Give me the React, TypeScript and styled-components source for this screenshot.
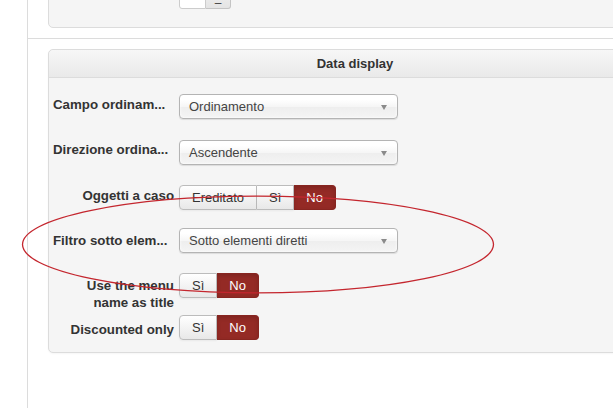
import React from "react";
import styled, { createGlobalStyle } from "styled-components";

const Global = createGlobalStyle`
  html, body { margin: 0; padding: 0; background: #fff; overflow: hidden; }
  body { font-family: "Liberation Sans", Arial, sans-serif; font-size: 13px; color: #333; }
`;

const Page = styled.div`
  position: relative;
  display: flex;
  width: 613px;
  height: 408px;
  overflow: hidden;
`;

const Sidebar = styled.div`
  flex: 0 0 27px;
  border-right: 1px solid #dcdcdc;
`;

const Main = styled.div`
  flex: 1;
  min-width: 0;
  padding-left: 20px;
  display: flex;
  flex-direction: column;
`;

const TopPanel = styled.div`
  flex: 0 0 auto;
  margin-top: -30px;
  height: 43px;
  width: 612px;
  box-sizing: content-box;
  padding: 13px 0 0 130px;
  background: #f5f5f5;
  border: 1px solid #dcdcdc;
  border-radius: 0 0 5px 5px;
`;

const Stepper = styled.div`
  display: flex;
  height: 25px;
`;

const StepInput = styled.div`
  width: 25px;
  background: #fff;
  border: 1px solid #ccc;
  border-radius: 3px 0 0 3px;
`;

const StepButton = styled.div`
  width: 25px;
  border: 1px solid #c4c4c4;
  border-left: none;
  border-radius: 0 3px 3px 0;
  background: linear-gradient(#f4f4f4, #e4e4e4);
  display: flex;
  align-items: center;
  justify-content: center;
  color: #444;
  font-size: 12px;
  line-height: 1;
  padding-top: 12px;
  box-sizing: border-box;
`;

const Rule = styled.div`
  margin: 10px 0 0 -20px;
  height: 0;
  border-top: 1px solid #dcdcdc;
  width: 700px;
`;

const Panel = styled.section`
  margin-top: 10px;
  width: 612px;
  flex: 0 0 auto;
  background: #f5f5f5;
  border: 1px solid #dcdcdc;
  border-radius: 5px;
  box-shadow: 0 1px 2px rgba(0, 0, 0, 0.04);
`;

const PanelHeader = styled.h3`
  margin: 0;
  height: 27px;
  line-height: 27px;
  text-align: center;
  font-size: 13px;
  font-weight: bold;
  color: #333;
  background: linear-gradient(#f7f7f7, #e9e9e9);
  border-bottom: 1px solid #dcdcdc;
  border-radius: 5px 5px 0 0;
`;

const PanelBody = styled.div`
  padding: 16px 0 12px 4px;
  display: flex;
  flex-direction: column;
`;

const Row = styled.div<{ $top: number }>`
  display: flex;
  align-items: flex-start;
  gap: 5px;
  margin-top: ${(p) => p.$top}px;
`;

const Label = styled.label<{ $pad: number; $left?: boolean }>`
  flex: 0 0 121px;
  padding-top: ${(p) => p.$pad}px;
  line-height: 17px;
  font-weight: bold;
  font-size: 13.3px;
  color: #333;
  white-space: nowrap;
  text-align: ${(p) => (p.$left ? "left" : "right")};
  overflow: visible;
`;

const SelectBox = styled.div`
  position: relative;
  width: 219px;
  height: 25px;
  box-sizing: border-box;
  padding: 0 24px 0 9px;
  line-height: 23px;
  color: #444;
  font-size: 13px;
  border: 1px solid #b4b4b4;
  border-radius: 4px;
  background: linear-gradient(#ffffff 20%, #f6f6f6 50%, #eeeeee 52%, #f4f4f4 100%);
  box-shadow: inset 0 0 3px #fff, 0 1px 1px rgba(0, 0, 0, 0.1);
  white-space: nowrap;
  overflow: hidden;
`;

const Caret = styled.span`
  position: absolute;
  right: 10px;
  top: 10px;
  width: 0;
  height: 0;
  border-left: 3px solid transparent;
  border-right: 3px solid transparent;
  border-top: 5px solid #8a8a8a;
`;

const Group = styled.div`
  display: flex;
`;

const Choice = styled.span<{ $on?: boolean }>`
  height: 25px;
  box-sizing: border-box;
  padding: 0 12px;
  line-height: 23px;
  font-size: 13px;
  color: ${(p) => (p.$on ? "#fff" : "#333")};
  background: ${(p) =>
    p.$on ? "#942a25" : "linear-gradient(#ffffff, #e8e8e8)"};
  border: 1px solid ${(p) => (p.$on ? "#872520" : "#bcbcbc")};
  border-left-width: 0;
  box-shadow: ${(p) =>
    p.$on ? "inset 0 2px 4px rgba(0,0,0,0.15)" : "0 1px 2px rgba(0,0,0,0.05)"};
  &:first-child {
    border-left-width: 1px;
    border-radius: 4px 0 0 4px;
  }
  &:last-child {
    border-radius: 0 4px 4px 0;
  }
`;

const Mark = styled.svg`
  position: absolute;
  left: 0;
  top: 0;
  pointer-events: none;
`;

function Select({ value }: { value: string }) {
  return (
    <SelectBox>
      {value}
      <Caret />
    </SelectBox>
  );
}

function Toggle({ options, active }: { options: string[]; active: string }) {
  return (
    <Group>
      {options.map((o) => (
        <Choice key={o} $on={o === active}>
          {o}
        </Choice>
      ))}
    </Group>
  );
}

export default function App() {
  return (
    <>
      <Global />
      <Page>
        <Sidebar />
        <Main>
          <TopPanel>
            <Stepper>
              <StepInput />
              <StepButton>–</StepButton>
            </Stepper>
          </TopPanel>
          <Rule />
          <Panel>
            <PanelHeader>Data display</PanelHeader>
            <PanelBody>
              <Row $top={0}>
                <Label $pad={2} $left>Campo ordinam...</Label>
                <Select value="Ordinamento" />
              </Row>
              <Row $top={21}>
                <Label $pad={1} $left>Direzione ordina...</Label>
                <Select value="Ascendente" />
              </Row>
              <Row $top={20}>
                <Label $pad={2}>Oggetti a caso</Label>
                <Toggle options={["Ereditato", "Sì", "No"]} active="No" />
              </Row>
              <Row $top={18}>
                <Label $pad={4} $left>Filtro sotto elem...</Label>
                <Select value="Sotto elementi diretti" />
              </Row>
              <Row $top={20}>
                <Label $pad={4}>
                  Use the menu
                  <br />
                  name as title
                </Label>
                <Toggle options={["Sì", "No"]} active="No" />
              </Row>
              <Row $top={4}>
                <Label $pad={6}>Discounted only</Label>
                <Toggle options={["Sì", "No"]} active="No" />
              </Row>
            </PanelBody>
          </Panel>
        </Main>
        <Mark width="613" height="408" viewBox="0 0 613 408">
          <ellipse
            cx="258"
            cy="244.5"
            rx="235.5"
            ry="48.3"
            fill="none"
            stroke="#c4262e"
            strokeWidth="1.3"
          />
        </Mark>
      </Page>
    </>
  );
}
